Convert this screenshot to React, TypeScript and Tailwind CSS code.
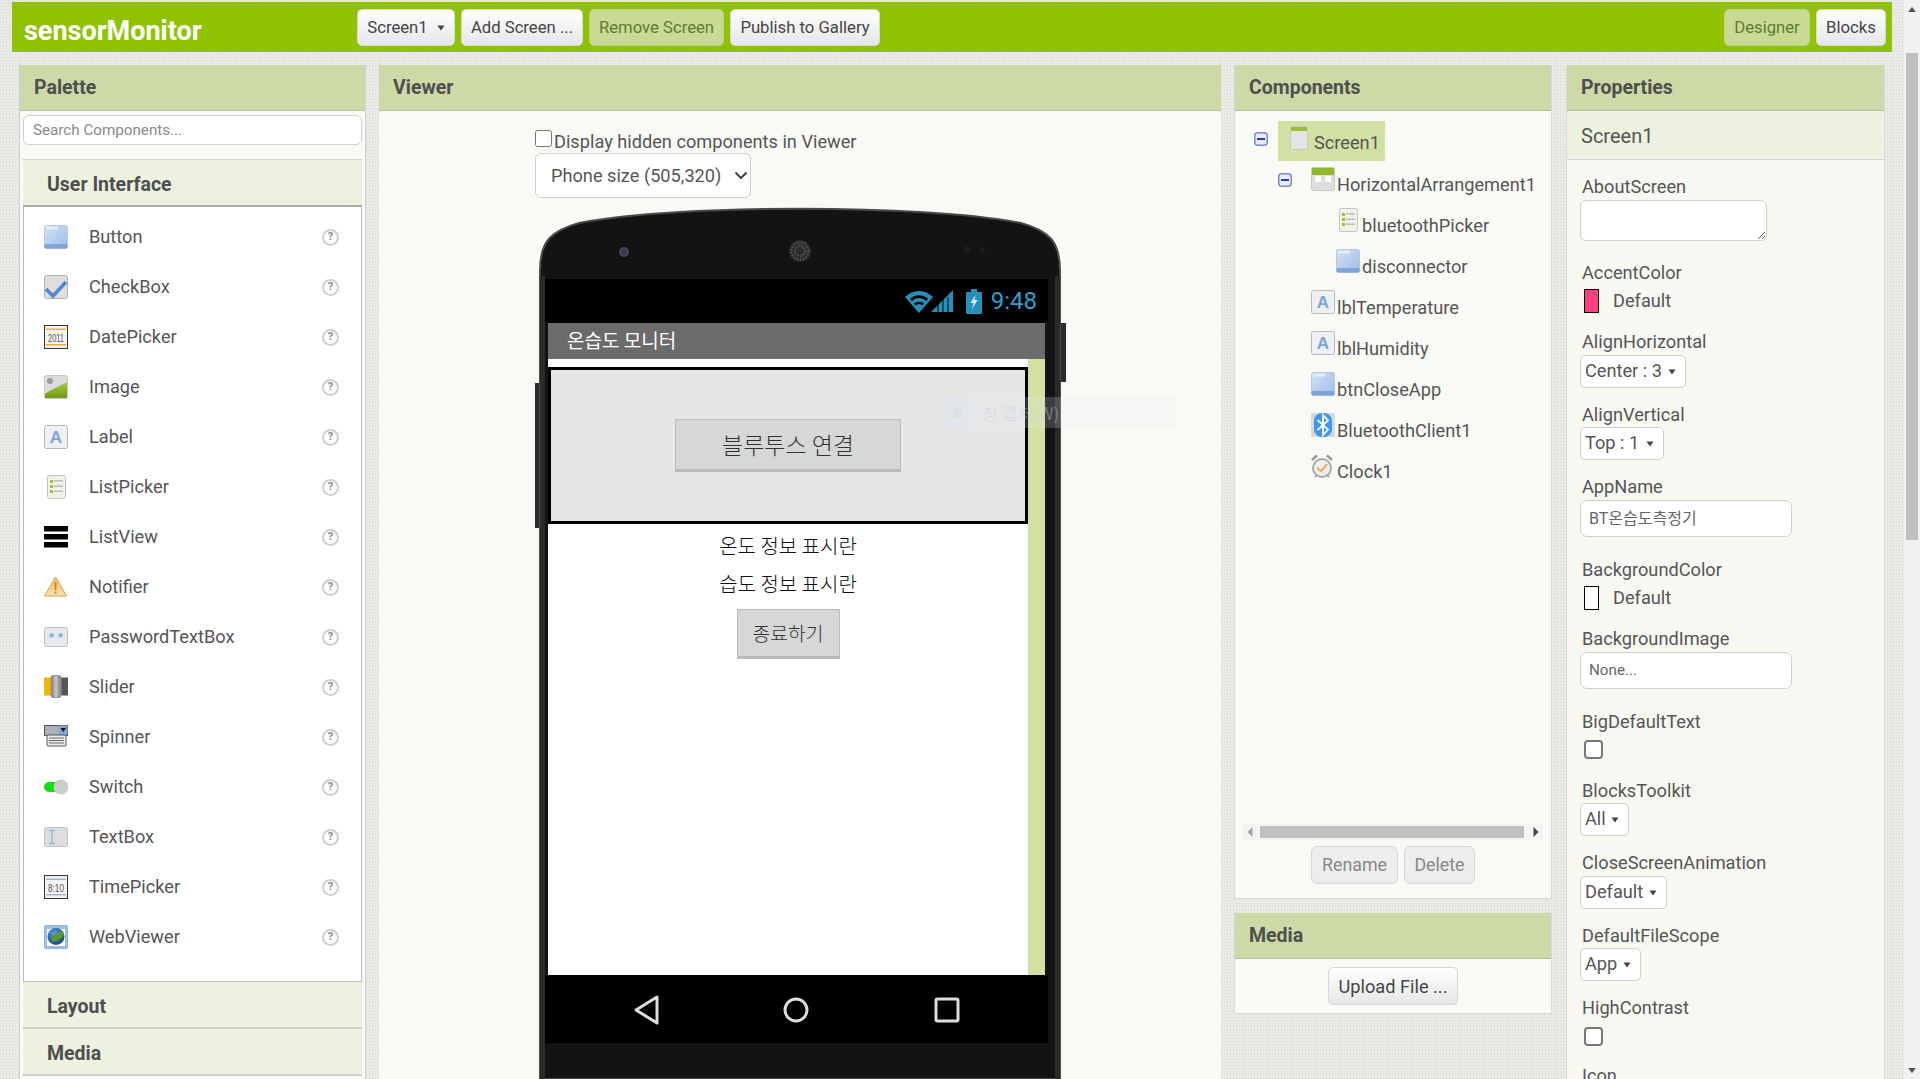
import React from "react";

const Defs = () => (
  <svg className="absolute w-0 h-0">
    <defs>
      <linearGradient id="btnG" x1="0" y1="0" x2="1" y2="1">
        <stop offset="0" stopColor="#d5e2f5" />
        <stop offset="1" stopColor="#9dbbe6" />
      </linearGradient>
      <linearGradient id="imgG" x1="0" y1="0" x2="0" y2="1">
        <stop offset="0" stopColor="#a9cc3e" />
        <stop offset="1" stopColor="#6f9a14" />
      </linearGradient>
      <linearGradient id="warnG" x1="0" y1="0" x2="0" y2="1">
        <stop offset="0" stopColor="#f0c060" />
        <stop offset="1" stopColor="#f6dfb0" />
      </linearGradient>
      <linearGradient id="knobG" x1="0" y1="0" x2="1" y2="0">
        <stop offset="0" stopColor="#777" />
        <stop offset="0.5" stopColor="#c8c8c8" />
        <stop offset="1" stopColor="#777" />
      </linearGradient>
      <radialGradient id="globeG" cx="0.4" cy="0.35" r="0.75">
        <stop offset="0" stopColor="#5ca0e0" />
        <stop offset="1" stopColor="#123c70" />
      </radialGradient>
    </defs>
  </svg>
);

const Ico = ({ n }: { n: string }) => {
  const p: Record<string, React.ReactNode> = {
    button: (
      <>
        <rect x="0.5" y="0.5" width="23" height="23" rx="2" fill="url(#btnG)" stroke="#b5c8e6" />
        <rect x="2" y="1.5" width="12" height="3" fill="#e3ecf9" />
        <rect x="0.5" y="19" width="23" height="4.5" rx="1.5" fill="#7fa3da" />
      </>
    ),
    checkbox: (
      <>
        <rect x="0.5" y="0.5" width="23" height="23" rx="2" fill="#dedede" stroke="#b0b0b0" />
        <path d="M2 14 L9 21 L22 7" fill="none" stroke="#4f86d6" strokeWidth="3.6" />
      </>
    ),
    date: (
      <>
        <rect x="0.5" y="0.5" width="23" height="23" fill="#f4f4f4" stroke="#333" />
        <rect x="2" y="3.5" width="20" height="1.5" fill="#f0a840" />
        <rect x="2" y="19" width="20" height="1.5" fill="#f0a840" />
        <text x="12" y="16.5" textAnchor="middle" fontSize="10" textLength="16" lengthAdjust="spacingAndGlyphs" fontFamily="Liberation Sans" fill="#555">2011</text>
      </>
    ),
    image: (
      <>
        <rect x="0.5" y="0.5" width="23" height="23" rx="2" fill="#dcdcdc" stroke="#c8c8c8" />
        <circle cx="6" cy="6" r="3" fill="#9a9a9a" />
        <path d="M1 19 C8 14 12 13 23 7 V23 H1 Z" fill="url(#imgG)" />
      </>
    ),
    label: (
      <>
        <rect x="0.5" y="0.5" width="23" height="23" rx="2" fill="#eef0f4" stroke="#b8b8b8" />
        <text x="12" y="18" textAnchor="middle" fontSize="17" fontWeight="700" fontFamily="Liberation Sans" fill="#7da5dc">A</text>
      </>
    ),
    list: (
      <>
        <rect x="3.5" y="0.5" width="18" height="23" rx="2" fill="#f1f3ea" stroke="#c4c4c4" />
        <rect x="6" y="5" width="3" height="3" fill="#9ac033" />
        <rect x="6" y="10" width="3" height="3" fill="#9ac033" />
        <rect x="6" y="15" width="3" height="3" fill="#9ac033" />
        <rect x="10" y="5" width="9" height="1.5" fill="#bbb" />
        <rect x="10" y="10.5" width="9" height="1.5" fill="#bbb" />
        <rect x="10" y="15.5" width="9" height="1.5" fill="#bbb" />
      </>
    ),
    listview: (
      <>
        <rect x="0" y="1" width="24" height="5.5" fill="#000" />
        <rect x="0" y="9" width="24" height="5.5" fill="#000" />
        <rect x="0" y="17" width="24" height="5.5" fill="#000" />
      </>
    ),
    notifier: (
      <>
        <path d="M11.5 2 L22.5 21 H0.5 Z" fill="url(#warnG)" stroke="#d9a040" />
        <rect x="10.5" y="7" width="2" height="8" fill="#c98a20" />
        <rect x="10.5" y="16.5" width="2" height="2" fill="#c98a20" />
      </>
    ),
    password: (
      <>
        <rect x="0.5" y="2.5" width="23" height="19" rx="2" fill="#e6e9ee" stroke="#c0c0c0" />
        <text x="7.5" y="17" textAnchor="middle" fontSize="13" fontWeight="700" fontFamily="Liberation Sans" fill="#7da5dc">*</text>
        <text x="16.5" y="17" textAnchor="middle" fontSize="13" fontWeight="700" fontFamily="Liberation Sans" fill="#7da5dc">*</text>
      </>
    ),
    slider: (
      <>
        <rect x="0" y="2.5" width="9" height="18" fill="#f2b600" />
        <rect x="15" y="2.5" width="9" height="18" fill="#555" />
        <rect x="7" y="0.5" width="10" height="22" rx="2" fill="url(#knobG)" stroke="#999" />
      </>
    ),
    spinner: (
      <>
        <rect x="0.5" y="0.5" width="23" height="10" fill="#aab0b8" stroke="#555" />
        <rect x="15" y="0.5" width="8.5" height="9" fill="#7da5dc" />
        <path d="M16.5 3 H22 L19.2 7 Z" fill="#111" />
        <rect x="3" y="10" width="19" height="11" rx="1" fill="#eee" stroke="#555" />
        <rect x="5" y="12.5" width="15" height="1" fill="#666" />
        <rect x="5" y="15" width="15" height="1" fill="#666" />
        <rect x="5" y="17.5" width="15" height="1" fill="#666" />
      </>
    ),
    switch: (
      <>
        <rect x="0" y="7" width="20" height="10" rx="5" fill="#10e010" />
        <circle cx="17" cy="12" r="7.5" fill="#cccccc" />
      </>
    ),
    textbox: (
      <>
        <rect x="0.5" y="2.5" width="23" height="19" rx="2" fill="#dedede" stroke="#c2c2c2" />
        <path d="M5 5.5 H11 M8 5.5 V18.5 M5 18.5 H11" stroke="#9db6dc" strokeWidth="1.4" fill="none" />
      </>
    ),
    time: (
      <>
        <rect x="0.5" y="0.5" width="23" height="23" fill="#f4f4f4" stroke="#333" />
        <rect x="2" y="3.5" width="20" height="1.5" fill="#9db6dc" />
        <rect x="2" y="19" width="20" height="1.5" fill="#9db6dc" />
        <text x="12" y="16.5" textAnchor="middle" fontSize="10" textLength="16" lengthAdjust="spacingAndGlyphs" fontFamily="Liberation Sans" fill="#555">8:10</text>
      </>
    ),
    web: (
      <>
        <rect x="0.5" y="0.5" width="23" height="23" rx="1" fill="#9dbde6" stroke="#8fb2e0" />
        <rect x="3" y="4" width="18" height="17" fill="#fff" />
        <circle cx="12" cy="11.5" r="8.5" fill="url(#globeG)" />
        <path d="M8 11 C11 9 15 8 17 6 L20 10 C17 14 12 17 8 16 Z" fill="#5f9a28" />
      </>
    ),
    screen: (
      <>
        <rect x="0.5" y="0.5" width="17" height="23" rx="2" fill="#e4e4e4" stroke="#c8c8c8" />
        <rect x="1" y="1" width="16" height="4" fill="#9ac033" />
      </>
    ),
    horiz: (
      <>
        <rect x="0.5" y="0.5" width="23" height="23" rx="2" fill="#dedede" stroke="#c8c8c8" />
        <rect x="1" y="1" width="22" height="7" rx="1" fill="#8fb82a" />
        <rect x="4" y="9" width="6" height="6" rx="1" fill="#fff" />
        <rect x="14" y="9" width="6" height="6" rx="1" fill="#fff" />
      </>
    ),
    bluetooth: (
      <>
        <rect x="0" y="0" width="24" height="24" fill="#d8d8d8" />
        <rect x="3" y="0" width="18" height="24" rx="8" fill="#3d96f2" />
        <path d="M6.5 7 L17 16.5 L12 22 V2 L17 7.5 L6.5 17" fill="none" stroke="#fff" strokeWidth="1.8" />
      </>
    ),
    clock: (
      <>
        <circle cx="11" cy="14" r="9" fill="#eee" stroke="#aaa" strokeWidth="2" />
        <path d="M6 14 L10 17 L16 10" fill="none" stroke="#f0a840" strokeWidth="1.8" />
        <path d="M1 6 L6 1.5 M21 6 L16 1.5" stroke="#999" strokeWidth="2.4" />
        <path d="M4 23 L6 21 M18 23 L16 21" stroke="#999" strokeWidth="1.5" />
      </>
    ),
  };
  return (
    <svg width="24" height="24" viewBox="0 0 24 24" className="shrink-0">
      {p[n]}
    </svg>
  );
};

const Btn = ({ children, w, dim }: { children: React.ReactNode; w: string; dim?: boolean }) => (
  <div
    className={
      w +
      " h-[37px] rounded-[5px] border flex items-center justify-center pt-[1px] text-[16.7px] " +
      (dim
        ? "bg-[#c9da94] border-[#bccf85] text-[#5f7a33]"
        : "bg-linear-to-b from-white to-[#e6e6e6] border-[#d8d8d8] text-[#444]")
    }
  >
    {children}
  </div>
);

const Caret = () => (
  <svg width="8" height="6" viewBox="0 0 8 6" className="shrink-0">
    <path d="M0.5 0.5 H7.5 L4 5.5 Z" fill="#444" />
  </svg>
);

const Head = ({ children }: { children: React.ReactNode }) => (
  <div className="h-[46px] shrink-0 bg-[#cddaa8] border-b border-[#b3bda0] flex items-center pl-[14px] pt-[1px] text-[19.5px] font-bold text-[#4f4f4f]">
    {children}
  </div>
);

const palette: [string, string][] = [
  ["Button", "button"],
  ["CheckBox", "checkbox"],
  ["DatePicker", "date"],
  ["Image", "image"],
  ["Label", "label"],
  ["ListPicker", "list"],
  ["ListView", "listview"],
  ["Notifier", "notifier"],
  ["PasswordTextBox", "password"],
  ["Slider", "slider"],
  ["Spinner", "spinner"],
  ["Switch", "switch"],
  ["TextBox", "textbox"],
  ["TimePicker", "time"],
  ["WebViewer", "web"],
];

const Section = ({ children, line }: { children: React.ReactNode; line?: string }) => (
  <div className={"h-[47px] bg-[#edf1e0] flex items-center pl-[24px] pt-[4px] text-[19.5px] font-bold text-[#4f4f4f] border-b-2 " + (line || "border-[#cfcfcf]")}>
    {children}
  </div>
);

const Minus = () => (
  <svg width="14" height="14" viewBox="0 0 14 14" className="shrink-0">
    <rect x="0.75" y="0.75" width="12.5" height="12.5" rx="3" fill="#e8ecf8" stroke="#7d88d0" strokeWidth="1.5" />
    <rect x="3" y="6" width="8" height="2" fill="#2a35c0" />
  </svg>
);

const TreeRow = ({ icon, text, pl, minus, textGap }: { icon: string; text: string; pl: string; minus?: boolean; textGap?: string }) => (
  <div className={"h-[41px] flex items-start " + pl}>
    {minus && (
      <div className="mt-[6px] mr-[19px]">
        <Minus />
      </div>
    )}
    <Ico n={icon} />
    <span className={"mt-[7px] leading-[22px] text-[18.2px] text-[#555] " + (textGap || "ml-[2px]")}>{text}</span>
  </div>
);

const Prop = ({ label, h, children, gap }: { label: string; h: string; gap: string; children: React.ReactNode }) => (
  <div className={h}>
    <div className="h-[20px] leading-[22px] text-[18.2px] text-[#555] pl-[2px]">{label}</div>
    <div className={gap}>{children}</div>
  </div>
);

const PSelect = ({ text, w }: { text: string; w: string }) => (
  <div className={w + " h-[33px] bg-white border border-[#cfcfcf] rounded-[5px] flex items-center justify-between pl-[4px] pr-[9px] text-[18.2px] text-[#555]"}>
    <span className="mb-[1px]">{text}</span>
    <Caret />
  </div>
);

const Swatch = ({ c }: { c: string }) => (
  <div className="flex items-center pl-[4px]">
    <div className={"w-[15px] h-[24px] border border-black " + c} />
    <span className="ml-[14px] text-[18.2px] leading-[22px] text-[#555]">Default</span>
  </div>
);

const Box = ({ children, size }: { children: React.ReactNode; size: string }) => (
  <div className={"w-[212px] h-[37px] bg-white border border-[#cfcfcf] rounded-[7px] flex items-center pl-[8px] text-[#666] [font-family:Roboto,'Noto_Sans_CJK_KR',sans-serif] " + size}>
    {children}
  </div>
);

const Check = () => <div className="ml-[4px] w-[19px] h-[19px] bg-white border-2 border-[#777] rounded-[4px]" />;

const Phone = () => (
  <div className="relative w-[522px] h-[873px] ml-[4px] mt-[8px]">
    <svg className="absolute inset-0" width="522" height="873" viewBox="0 0 522 873">
      <path d="M1 65 C1 35 12 25 40 17 C140 -2 382 -2 482 17 C510 25 521 35 521 65 V873 H1 Z" fill="#131313" stroke="#4a4a4a" strokeWidth="2" />
      <rect x="1" y="70" width="5" height="803" fill="#2a2a2a" />
      <rect x="516" y="70" width="5" height="803" fill="#2a2a2a" />
      <circle cx="85" cy="46" r="5" fill="#444" />
      <circle cx="85" cy="46" r="2" fill="#22308a" />
      <circle cx="261" cy="45" r="11" fill="#2c2c2c" />
      <circle cx="261" cy="45" r="8.5" fill="none" stroke="#555" strokeWidth="2" strokeDasharray="1.5 1.5" />
      <circle cx="261" cy="45" r="5" fill="none" stroke="#555" strokeWidth="2" strokeDasharray="1.5 1.5" />
      <circle cx="428" cy="44" r="3.5" fill="#1d1d1d" />
      <circle cx="443" cy="44" r="2.5" fill="#1d1d1d" />
    </svg>
    <div className="absolute left-[-4px] top-[177px] w-[4px] h-[145px] bg-[#2b2b2b]" />
    <div className="absolute right-[-5px] top-[117px] w-[5px] h-[59px] bg-[#2b2b2b]" />
    <div className="relative pt-[73px] pl-[6px] w-[509px]">
      <div className="h-[44px] bg-black flex items-center justify-end pr-[11px] gap-[9px] text-[#2a9fd0]">
        <svg width="50" height="24" viewBox="0 0 50 24" className="shrink-0">
          <path d="M0 8 C8 0 20 0 28 8 L14 24 Z" fill="#2690b8" />
          <path d="M5 10 C10 5 18 5 23 10 L21 12 C17 8 11 8 7 12 Z" fill="#000" />
          <path d="M9 14.5 C12 12 16 12 19 14.5 L17.5 16.5 C15 14.5 13 14.5 10.5 16.5 Z" fill="#000" />
          <path d="M26 23 L48 1 V23 Z" fill="#2690b8" />
          <path d="M33 8 V24 M38 8 V24 M43 8 V24" stroke="#000" strokeWidth="1" />
        </svg>
        <svg width="16" height="25" viewBox="0 0 16 25" className="shrink-0 ml-[2px]">
          <rect x="5" y="0" width="6" height="3" fill="#2690b8" />
          <rect x="0" y="3" width="16" height="22" rx="1" fill="#2690b8" />
          <path d="M9.5 6 L4.5 14 H7.5 L6 20 L11.5 11 H8.5 Z" fill="#d8f0fa" />
        </svg>
        <span className="text-[24px] leading-none">9:48</span>
      </div>
      <div className="ml-[3px] w-[497px] h-[36px] bg-[#6b6b6b] flex items-center pl-[19px] pb-[2px] text-[19px] text-white [font-family:'Noto_Sans_CJK_KR',sans-serif]">
        온습도 모니터
      </div>
      <div className="ml-[3px] w-[497px] h-[616px] flex bg-white [font-family:'Noto_Sans_CJK_KR',sans-serif]">
        <div className="w-[480px] pt-[8px] flex flex-col items-center">
          <div className="w-[480px] h-[157px] border-[3px] border-black bg-[#e6e6e6] flex items-center justify-center">
            <div className="w-[226px] h-[53px] bg-[#d6d7d7] border border-[#bbb] border-b-[3px] flex items-center justify-center text-[23px] font-light text-[#333]">
              블루투스 연결
            </div>
          </div>
          <div className="mt-[3px] h-[38px] flex items-center text-[20px] font-light text-[#111]">온도 정보 표시란</div>
          <div className="h-[38px] flex items-center text-[20px] font-light text-[#111]">습도 정보 표시란</div>
          <div className="mt-[6px] w-[103px] h-[50px] bg-[#d6d7d7] border border-[#bbb] border-b-[3px] flex items-center justify-center text-[19.3px] font-light text-[#333]">
            종료하기
          </div>
        </div>
        <div className="w-[17px] bg-[#d3e0a4]" />
      </div>
      <div className="h-[68px] bg-black">
        <svg width="503" height="68" viewBox="0 0 503 68">
          <path d="M91 35 L112 22 V48 Z" fill="none" stroke="#ddd" strokeWidth="3" strokeLinejoin="round" />
          <circle cx="251" cy="35" r="11" fill="none" stroke="#ddd" strokeWidth="3" />
          <rect x="391" y="24" width="22" height="22" rx="1.5" fill="none" stroke="#ddd" strokeWidth="3" />
        </svg>
      </div>
    </div>
  </div>
);

export default function App() {
  return (
    <div className="relative w-[1920px] h-[1079px] overflow-hidden flex font-['Roboto',sans-serif] bg-[#ececea] bg-[linear-gradient(#e3e3e0_1px,transparent_1px),linear-gradient(90deg,#e3e3e0_1px,transparent_1px)] bg-[size:3px_3px]">
      <Defs />
      <div className="w-[1904px] shrink-0">
        <div className="ml-[12px] mt-[2px] w-[1880px] h-[50px] bg-[#8fc202] flex items-center pl-[12px] pr-[6px]">
          <div className="w-[333px] pt-[9px] text-[27px] font-bold text-white">sensorMonitor</div>
          <div className="flex gap-[6px]">
            <Btn w="w-[98px] gap-[9px]">
              Screen1 <Caret />
            </Btn>
            <Btn w="w-[122px]">Add Screen ...</Btn>
            <Btn w="w-[135px]" dim>
              Remove Screen
            </Btn>
            <Btn w="w-[150px]">Publish to Gallery</Btn>
          </div>
          <div className="ml-auto flex gap-[6px]">
            <Btn w="w-[86px]" dim>
              Designer
            </Btn>
            <Btn w="w-[70px]">Blocks</Btn>
          </div>
        </div>

        <div className="flex items-start mt-[13px] ml-[19px]">
          <div className="w-[347px] h-[1020px] shrink-0 bg-[#f9faf5] border-x border-[#d0d0d0] flex flex-col">
            <Head>Palette</Head>
            <div className="px-[3px]">
              <div className="mt-[4px] h-[30px] bg-white border border-[#cfcfcf] rounded-[6px] flex items-center pl-[9px] text-[15.2px] text-[#8a8a8a]">
                Search Components...
              </div>
              <div className="mt-[14px] border-t border-[#cfcfcf]">
                <Section line="border-[#aaa]">User Interface</Section>
              </div>
              <div className="bg-white border-x border-b border-[#bbb] pt-[5px] pb-[19px]">
                {palette.map(([t, i]) => (
                  <div key={t} className="h-[50px] flex items-center pl-[20px]">
                    <Ico n={i} />
                    <span className="ml-[21px] flex-1 text-[18.2px] text-[#555]">{t}</span>
                    <div className="mr-[22px] w-[17px] h-[17px] rounded-full bg-white border-2 border-[#cfcfcf] flex items-center justify-center text-[11px] font-bold text-[#888]">
                      ?
                    </div>
                  </div>
                ))}
              </div>
              <Section>Layout</Section>
              <Section>Media</Section>
            </div>
          </div>

          <div className="ml-[13px] w-[842px] h-[1020px] shrink-0 bg-[#f9faf5] flex flex-col">
            <Head>Viewer</Head>
            <div className="pl-[156px]">
              <div className="mt-[18px] h-[24px] flex items-center text-[18.2px] leading-[26px] text-[#555]">
                <input type="checkbox" className="w-[17px] h-[17px] mr-[2px] mb-[6px]" />
                <span className="mt-[2px]">Display hidden components in Viewer</span>
              </div>
              <div className="relative w-[216px] h-[45px]">
                <select className="appearance-none w-[216px] h-[45px] bg-white border border-[#cfcfcf] rounded-[6px] pl-[15px] pr-[4px] text-[18.2px] text-[#555]">
                  <option>Phone size (505,320)</option>
                </select>
                <svg width="14" height="9" viewBox="0 0 14 9" className="absolute right-[3px] top-[18px]">
                  <path d="M1.5 1.5 L7 7 L12.5 1.5" fill="none" stroke="#444" strokeWidth="2" />
                </svg>
              </div>
              <Phone />
            </div>
          </div>

          <div className="ml-[13px] w-[318px] shrink-0 flex flex-col gap-[14px]">
            <div className="h-[834px] bg-[#f9faf5] border-x border-b border-[#d8d8d8] flex flex-col">
              <Head>Components</Head>
              <div className="flex-1">
                <div className="mt-[10px] ml-[19px] flex items-start">
                  <div className="mt-[11px] mr-[10px]">
                    <Minus />
                  </div>
                  <div className="w-[107px] h-[40px] bg-[#d3e0a4] flex items-start pl-[12px] pt-[5px]">
                    <Ico n="screen" />
                    <span className="mt-[6px] leading-[22px] text-[18.2px] text-[#555]">Screen1</span>
                  </div>
                </div>
                <div className="mt-[6px]">
                  <TreeRow icon="horiz" text="HorizontalArrangement1" pl="pl-[43px]" minus />
                  <TreeRow icon="list" text="bluetoothPicker" pl="pl-[101px]" />
                  <TreeRow icon="button" text="disconnector" pl="pl-[101px]" />
                  <TreeRow icon="label" text="lblTemperature" pl="pl-[76px]" />
                  <TreeRow icon="label" text="lblHumidity" pl="pl-[76px]" />
                  <TreeRow icon="button" text="btnCloseApp" pl="pl-[76px]" />
                  <TreeRow icon="bluetooth" text="BluetoothClient1" pl="pl-[76px]" />
                  <TreeRow icon="clock" text="Clock1" pl="pl-[76px]" />
                </div>
              </div>
              <div className="mx-[8px] h-[16px] bg-[#f3f3f3] flex items-center justify-between px-[4px]">
                <svg width="6" height="10" viewBox="0 0 6 10"><path d="M5.5 0 V10 L0.5 5 Z" fill="#a3a3a3" /></svg>
                <div className="w-[264px] h-[12px] -ml-[3px] bg-[#bfbfbf]" />
                <svg width="6" height="10" viewBox="0 0 6 10"><path d="M0.5 0 V10 L5.5 5 Z" fill="#444" /></svg>
              </div>
              <div className="mt-[6px] mb-[14px] flex justify-center gap-[6px]">
                <div className="w-[87px] h-[38px] bg-[#ededed] border border-[#d8d8d8] rounded-[6px] flex items-center justify-center text-[17.8px] text-[#888]">Rename</div>
                <div className="w-[71px] h-[38px] bg-[#ededed] border border-[#d8d8d8] rounded-[6px] flex items-center justify-center text-[17.8px] text-[#888]">Delete</div>
              </div>
            </div>
            <div className="h-[101px] bg-[#f9faf5] border-x border-b border-[#d8d8d8]">
              <Head>Media</Head>
              <div className="mt-[8px] flex justify-center">
                <Btn w="w-[130px] !h-[38px] !text-[18.2px]">Upload File ...</Btn>
              </div>
            </div>
          </div>

          <div className="ml-[14px] w-[319px] h-[1020px] shrink-0 bg-[#f8f8f3] border-x border-[#d8d8d8] flex flex-col">
            <Head>Properties</Head>
            <div className="h-[49px] shrink-0 bg-[#edf1e0] border-b border-[#d8d8d8] flex items-center pl-[14px] pt-[2px] text-[20px] text-[#555]">Screen1</div>
            <div className="pl-[13px] pt-[16px]">
              <Prop label="AboutScreen" h="h-[86px]" gap="mt-[4px]">
                <textarea className="block w-[187px] h-[41px] bg-white border border-[#cfcfcf] rounded-[6px]" />
              </Prop>
              <Prop label="AccentColor" h="h-[69px]" gap="mt-[7px]">
                <Swatch c="bg-[#ff4081]" />
              </Prop>
              <Prop label="AlignHorizontal" h="h-[73px]" gap="mt-[4px]">
                <PSelect text="Center : 3" w="w-[106px]" />
              </Prop>
              <Prop label="AlignVertical" h="h-[72px]" gap="mt-[3px]">
                <PSelect text="Top : 1" w="w-[84px]" />
              </Prop>
              <Prop label="AppName" h="h-[83px]" gap="mt-[4px]">
                <Box size="text-[16px]">BT온습도측정기</Box>
              </Prop>
              <Prop label="BackgroundColor" h="h-[69px]" gap="mt-[7px]">
                <Swatch c="bg-white" />
              </Prop>
              <Prop label="BackgroundImage" h="h-[83px]" gap="mt-[4px]">
                <Box size="text-[15.2px]">None...</Box>
              </Prop>
              <Prop label="BigDefaultText" h="h-[69px]" gap="mt-[9px]">
                <Check />
              </Prop>
              <Prop label="BlocksToolkit" h="h-[72px]" gap="mt-[3px]">
                <PSelect text="All" w="w-[49px]" />
              </Prop>
              <Prop label="CloseScreenAnimation" h="h-[73px]" gap="mt-[4px]">
                <PSelect text="Default" w="w-[87px]" />
              </Prop>
              <Prop label="DefaultFileScope" h="h-[72px]" gap="mt-[3px]">
                <PSelect text="App" w="w-[61px]" />
              </Prop>
              <Prop label="HighContrast" h="h-[68px]" gap="mt-[10px]">
                <Check />
              </Prop>
              <Prop label="Icon" h="h-[70px]" gap="mt-[4px]">
                <span />
              </Prop>
            </div>
          </div>
        </div>
      </div>

      <div className="w-[16px] shrink-0 bg-[#f1f1f1] flex flex-col items-center">
        <svg width="8" height="5" viewBox="0 0 8 5" className="mt-[7px]"><path d="M0 5 L4 0 L8 5 Z" fill="#555" /></svg>
        <div className="mt-[41px] w-[12px] h-[487px] bg-[#bfbfbf]" />
        <svg width="8" height="5" viewBox="0 0 8 5" className="mt-auto mb-[6px]"><path d="M0 0 L4 5 L8 0 Z" fill="#555" /></svg>
      </div>

      <div className="absolute left-[941px] top-[397px] w-[236px] h-[31px] flex items-center bg-[#e4ebf2]/20 text-[#cdd2d8]/40 text-[17px] [font-family:'Noto_Sans_CJK_KR',sans-serif]">
        <div className="w-[31px] h-[31px] bg-[#dfe6f0]/40 flex items-center justify-center">
          <div className="w-[10px] h-[10px] rounded-full bg-[#cfd6df]/40" />
        </div>
        <span className="ml-[10px]">창 캡처(W)</span>
      </div>
    </div>
  );
}
